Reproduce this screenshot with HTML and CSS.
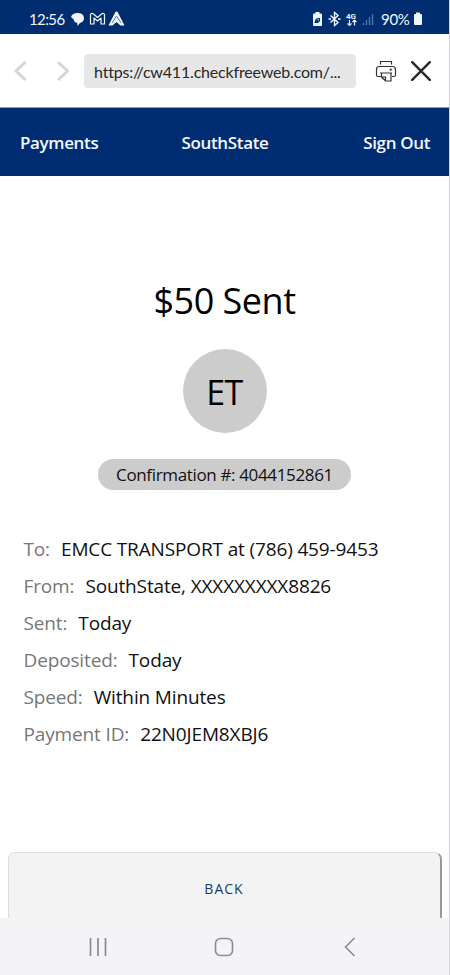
FILE: index.html
```html
<!DOCTYPE html>
<html lang="en">
<head>
<meta charset="utf-8">
<title>Payment sent</title>
<link rel="stylesheet" href="styles.css">
</head>
<body>
<div class="screen">
  <header class="status">
    <span class="clock">12:56</span>
    <svg class="notices" width="54" height="16" viewBox="0 0 54 16">
      <path fill="#f0f5fc" d="M5.500 2Q12.500 1.500 13 7q0 4-4 5l-2.500 3-.3-3Q3 11.500 2.700 8.500L0 6Q1 2.500 5.500 2z"/>
      <path fill="none" stroke="#f0f5fc" stroke-width="1.200" stroke-linejoin="round" d="M19.500 13V3.500q1-2 3-.5l4 3.500 4-3.500q2-1.500 3 .5V13h-3.500V7l-3.500 3-3.500-3v6z"/>
      <path fill="#f0f5fc" d="M44.500.8h2L53.500 14.500h-4l-4-3.500-4 3.500h-4z"/>
      <path fill="none" stroke="#5474a8" d="M41 12l4.500-7 4.500 7"/>
    </svg>
    <span class="spacer"></span>
    <svg class="signals" width="64" height="16" viewBox="0 0 64 16">
      <path fill="#f0f5fc" d="M3.500 1h4v1.500H9q1 0 1 1V14q0 1-1 1H2q-1 0-1-1V3.500q0-1 1-1h1.500z"/>
      <path fill="none" stroke="#002d72" stroke-width="1.200" d="M3.500 11.500q-.5-4 4-4 .5 4-4 4l2.500-2.500"/>
      <path fill="none" stroke="#f0f5fc" stroke-width="1.400" d="M18.500 4.500l7.500 7-3.500 3V1.500l3.500 3-7.500 7M16.500 8h2.500M26 8h2.500"/>
      <text class="network" x="34" y="7.500">4G</text>
      <path fill="none" stroke="#f0f5fc" stroke-width="1.200" d="M37.500 9v5.500m-2-2l2 2 2-2M42.500 14.500V9m-2 2l2-2 2 2"/>
      <path fill="none" stroke="#5474a8" stroke-width="1.400" d="M51.500 14v-2M54.500 14v-5M57.500 14V6M60.500 14V3"/>
    </svg>
    <span class="percent">90%</span>
    <svg class="battery" width="10" height="14" viewBox="0 0 10 14"><path fill="#f0f5fc" d="M3 .5h4V2h1q1 0 1 1v9q0 1-1 1H2q-1 0-1-1V3q0-1 1-1h1z"/></svg>
  </header>
  <div class="browser">
    <svg class="arrows" width="58" height="24" viewBox="0 0 58 24"><path fill="none" stroke="#d6d6d6" stroke-width="3" d="M12.500 3L3 12l9.500 9M45 3l9.500 9-9.500 9"/></svg>
    <div class="address"><span>https://cw411.checkfreeweb.com/...</span></div>
    <svg class="printer" width="22" height="22" viewBox="0 0 22 22" fill="none" stroke="#333" stroke-width="1.200">
      <path d="M5.500 4.500V1.500h11v3M6 16.500H3q-1.500 0-1.500-1.500V9.500Q1.500 6.500 4.500 6.500h13q3 0 3 3V15q0 1.500-1.500 1.500h-2M6.500 13h9.500v8H10.500L6.500 17zM6.500 17h4v4M5 13h12"/><circle cx="15.700" cy="9.700" r="1.100" fill="#333" stroke="none"/>
    </svg>
    <svg class="close" width="20" height="20" viewBox="0 0 20 20"><path stroke="#282828" stroke-width="2.400" stroke-linecap="round" d="M1.200 1.200l17.600 17.600M18.800 1.200L1.200 18.800"/></svg>
  </div>
  <nav class="bank"><span>Payments</span><span>SouthState</span><span>Sign Out</span></nav>
  <main class="content">
    <h1>$50 Sent</h1>
    <div class="avatar">ET</div>
    <div class="confirmation">Confirmation #: 4044152861</div>
    <dl class="details">
      <div><dt>To:</dt><dd>EMCC TRANSPORT at (786) 459-9453</dd></div>
      <div><dt>From:</dt><dd>SouthState, XXXXXXXXX8826</dd></div>
      <div><dt>Sent:</dt><dd>Today</dd></div>
      <div><dt>Deposited:</dt><dd>Today</dd></div>
      <div><dt>Speed:</dt><dd>Within Minutes</dd></div>
      <div><dt>Payment ID:</dt><dd>22N0JEM8XBJ6</dd></div>
    </dl>
    <button class="back">BACK</button>
  </main>
  <footer class="system">
    <svg width="18" height="18" viewBox="0 0 18 18"><path stroke="#8b8b8e" stroke-width="1.700" d="M1.500 0v18M9 0v18M16.500 0v18"/></svg>
    <svg width="20" height="20" viewBox="0 0 20 20"><rect x="1.500" y="1.500" width="17" height="17" rx="5" fill="none" stroke="#8b8b8e" stroke-width="1.600"/></svg>
    <svg width="12" height="20" viewBox="0 0 12 20"><path d="M10.500 1L1.500 10l9 9" fill="none" stroke="#8b8b8e" stroke-width="1.600"/></svg>
  </footer>
</div>
</body>
</html>
```
FILE: styles.css
```css
* { box-sizing: border-box; }
body { margin: 0; background: #fff; font-family: "Open Sans", sans-serif; color: #111; }
.screen { width: 450px; height: 975px; display: flex; flex-direction: column; overflow: hidden; border-right: 1px solid #d5d5d8; }
.status { height: 34px; flex: none; background: #002d6f; color: #f0f5fc; display: flex; align-items: center; padding: 4px 27px 0 29px; margin-right: -1px; }
.clock { width: 42px; font: 15px/18px Lato, sans-serif; letter-spacing: -0.6px; white-space: nowrap; }
.notices { display: block; }
.spacer { flex: 1; }
.signals { margin-right: 5px; }
.network { font: bold 8px Roboto, sans-serif; fill: #f0f5fc; }
.percent { width: 31px; font: 15px/18px Lato, sans-serif; letter-spacing: -0.3px; white-space: nowrap; }
.battery { margin-left: 1px; }
.browser { height: 74px; flex: none; display: flex; align-items: center; padding-left: 13px; border-bottom: 1px solid #8c9fbd; }
.arrows { flex: none; }
.address { width: 272px; height: 34px; margin-left: 13px; border-radius: 4px; background: #e7e7e7; color: #292929; padding-left: 10px; font: 16px/35px Lato, sans-serif; letter-spacing: -0.18px; font-variant-ligatures: none; white-space: nowrap; }
.printer { margin-left: 19px; flex: none; }
.close { margin-left: 14px; flex: none; }
.bank { height: 68px; flex: none; display: grid; grid-template-columns: 1fr 1fr 1fr; align-items: center; padding: 0 20px; margin-right: -1px; background: #002d72; color: #f4f8ff; font-weight: 600; font-size: 17px; letter-spacing: -0.36px; }
.bank span:nth-child(2) { text-align: center; }
.bank span:last-child { text-align: right; }
.content { flex: 1; min-height: 0; display: flex; flex-direction: column; align-items: center; overflow: hidden; }
h1 { margin: 100px 0 0; font-size: 36px; line-height: 50px; font-weight: 400; letter-spacing: -0.5px; color: #000; }
.avatar { width: 84px; height: 84px; flex: none; border-radius: 50%; margin-top: 23px; background: #ccc; color: #000; font-size: 34px; line-height: 86px; letter-spacing: -0.5px; text-align: center; }
.confirmation { width: 253px; height: 31px; flex: none; margin-top: 26px; border-radius: 16px; background: #ccc; font-size: 17px; line-height: 31px; letter-spacing: -0.35px; text-align: center; white-space: nowrap; }
.details { width: 100%; margin: 41px 0 0; padding-left: 23.5px; font-size: 19px; line-height: 37px; letter-spacing: -0.14px; }
.details div { display: flex; gap: 11px; white-space: nowrap; }
.details dt { color: #777; }
.details dd { margin: 0; }
.back { width: 434px; height: 80px; flex: none; margin-top: 99px; border: 1px solid #ddd; border-right: 2px solid #999; border-radius: 7px; background: #f3f3f3; color: #173e63; font: 14px "Open Sans", sans-serif; letter-spacing: 1px; padding: 0 0 8px; }
.system { height: 57px; flex: none; background: #f4f4f7; display: flex; align-items: center; padding-left: 89px; }
.system svg:nth-child(2) { margin-left: 107px; }
.system svg:nth-child(3) { margin-left: 110px; }
```
